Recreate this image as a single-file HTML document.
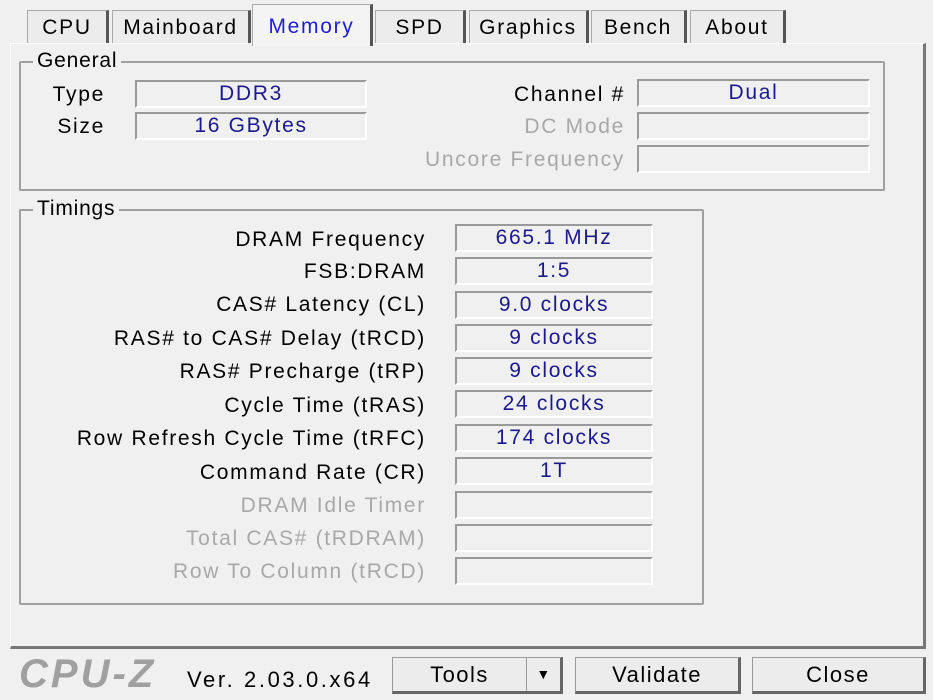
<!DOCTYPE html>
<html><head><style>
body{margin:0;width:933px;height:700px;background:#f0f0f0;font-family:"Liberation Sans",sans-serif;font-size:21px;letter-spacing:1.7px;color:#000;position:relative;overflow:hidden}
div{position:absolute;box-sizing:border-box}
.tab{top:10px;height:34px;border:1px solid #aaa;border-bottom:none;border-right:3px solid #555;background:#ececec;text-align:center;line-height:34px}
.grp{border:2px solid #a0a0a0;border-radius:2px}
.lg{background:#f0f0f0;padding:0 4px;line-height:22px;letter-spacing:0.8px}
.lbl{text-align:right;line-height:28px;white-space:nowrap}
.box{border:2px solid #9a9a9a;border-right-color:#fff;border-bottom-color:#fff;color:#1a1a8c;text-align:center;line-height:24px}
.dis{color:#a8a8a8}
.btn{top:657px;height:37px;border:1px solid #999;border-right:3px solid #666;border-bottom:3px solid #666;background:#ececec;text-align:center;line-height:33px;font-size:22px;letter-spacing:1.5px}
</style></head><body>
<div class="tab" style="left:27px;width:82px">CPU</div>
<div class="tab" style="left:112px;width:139px">Mainboard</div>
<div class="tab" style="left:252px;width:121px;top:4px;height:42px;background:#f4f4f4;color:#2020d0;line-height:44px;z-index:2;border-bottom:none">Memory</div>
<div class="tab" style="left:375px;width:91px">SPD</div>
<div class="tab" style="left:469px;width:120px">Graphics</div>
<div class="tab" style="left:591px;width:96px">Bench</div>
<div class="tab" style="left:690px;width:96px">About</div>
<div style="left:10px;top:43px;width:916px;height:606px;border:1px solid #fff;border-right:3px solid #777;border-bottom:3px solid #777;background:#f0f0f0"></div>

<div class="grp" style="left:19px;top:61px;width:866px;height:130px"></div>
<div class="lg" style="left:33px;top:50px">General</div>
<div class="lbl" style="left:30px;top:81px;width:75px">Type</div>
<div class="lbl" style="left:30px;top:113px;width:75px">Size</div>
<div class="box" style="left:135px;top:80px;width:232px;height:28px">DDR3</div>
<div class="box" style="left:135px;top:112px;width:232px;height:28px">16 GBytes</div>
<div class="lbl" style="left:400px;top:81px;width:225px">Channel #</div>
<div class="lbl dis" style="left:400px;top:113px;width:225px">DC Mode</div>
<div class="lbl dis" style="left:360px;top:146px;width:265px">Uncore Frequency</div>
<div class="box" style="left:637px;top:79px;width:233px;height:28px">Dual</div>
<div class="box" style="left:637px;top:112px;width:233px;height:28px"></div>
<div class="box" style="left:637px;top:145px;width:233px;height:28px"></div>

<div class="grp" style="left:19px;top:209px;width:685px;height:396px"></div>
<div class="lg" style="left:33px;top:198px">Timings</div>

<div class="lbl" style="left:30px;top:226px;width:396px">DRAM Frequency</div>
<div class="box" style="left:455px;top:224px;width:198px;height:28px">665.1 MHz</div>
<div class="lbl" style="left:30px;top:258px;width:396px">FSB:DRAM</div>
<div class="box" style="left:455px;top:257px;width:198px;height:28px">1:5</div>
<div class="lbl" style="left:30px;top:291px;width:396px">CAS# Latency (CL)</div>
<div class="box" style="left:455px;top:291px;width:198px;height:28px">9.0 clocks</div>
<div class="lbl" style="left:30px;top:325px;width:396px">RAS# to CAS# Delay (tRCD)</div>
<div class="box" style="left:455px;top:324px;width:198px;height:28px">9 clocks</div>
<div class="lbl" style="left:30px;top:358px;width:396px">RAS# Precharge (tRP)</div>
<div class="box" style="left:455px;top:357px;width:198px;height:28px">9 clocks</div>
<div class="lbl" style="left:30px;top:392px;width:396px">Cycle Time (tRAS)</div>
<div class="box" style="left:455px;top:390px;width:198px;height:28px">24 clocks</div>
<div class="lbl" style="left:30px;top:425px;width:396px">Row Refresh Cycle Time (tRFC)</div>
<div class="box" style="left:455px;top:424px;width:198px;height:28px">174 clocks</div>
<div class="lbl" style="left:30px;top:459px;width:396px">Command Rate (CR)</div>
<div class="box" style="left:455px;top:457px;width:198px;height:28px">1T</div>
<div class="lbl dis" style="left:30px;top:492px;width:396px">DRAM Idle Timer</div>
<div class="box" style="left:455px;top:491px;width:198px;height:28px"></div>
<div class="lbl dis" style="left:30px;top:525px;width:396px">Total CAS# (tRDRAM)</div>
<div class="box" style="left:455px;top:524px;width:198px;height:28px"></div>
<div class="lbl dis" style="left:30px;top:558px;width:396px">Row To Column (tRCD)</div>
<div class="box" style="left:455px;top:557px;width:198px;height:28px"></div>

<div style="left:19px;top:652px;font-size:40px;letter-spacing:3px;font-weight:bold;font-style:italic;color:#a0a0a0;line-height:44px">CPU-Z</div>
<div style="left:187px;top:667px;line-height:26px;font-size:22px;letter-spacing:2.6px">Ver. 2.03.0.x64</div>
<div class="btn" style="left:392px;width:171px"><span style="position:absolute;left:0;width:133px">Tools</span><span style="position:absolute;left:133px;top:0;bottom:0;border-left:1px solid #999;width:34px;font-size:14px">▼</span></div>
<div class="btn" style="left:575px;width:166px">Validate</div>
<div class="btn" style="left:752px;width:174px">Close</div>
</body></html>
